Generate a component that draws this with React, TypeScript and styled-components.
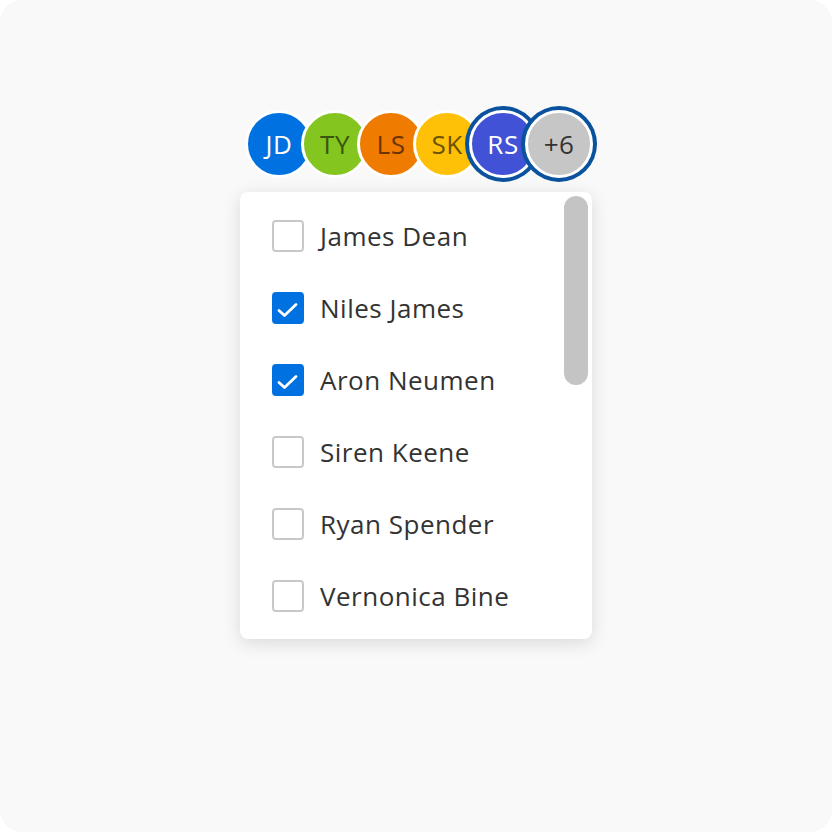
import React from "react";
import styled, { createGlobalStyle } from "styled-components";

const GlobalStyle = createGlobalStyle`
  html, body { margin: 0; padding: 0; background: #ffffff; }
  body { font-family: "Open Sans", "Noto Sans", sans-serif; }
  * { box-sizing: border-box; }
`;

const Page = styled.div`
  width: 832px;
  height: 832px;
  background: #f9f9f9;
  border-radius: 22px;
  display: flex;
  flex-direction: column;
  align-items: center;
  padding-top: 106px;
`;

const AvatarStack = styled.div`
  display: flex;
  align-items: center;
  height: 76px;
  padding-left: 6px;
`;

const Avatar = styled.div<{ $bg: string; $fg: string; $selected?: boolean }>`
  width: 68px;
  height: 68px;
  border-radius: 50%;
  border: 3px solid #ffffff;
  background: ${(p) => p.$bg};
  color: ${(p) => p.$fg};
  display: flex;
  align-items: center;
  justify-content: center;
  font-family: "Open Sans", "Noto Sans", sans-serif;
  font-size: 26px;
  letter-spacing: 0.5px;
  flex: none;
  position: relative;
  box-shadow: ${(p) => (p.$selected ? "0 0 0 4px #0a519e" : "none")};
  & + & {
    margin-left: -12px;
  }
`;

const Panel = styled.div`
  margin-top: 10px;
  width: 352px;
  height: 447px;
  background: #ffffff;
  border-radius: 8px;
  box-shadow: 0 4px 18px rgba(0, 0, 0, 0.13);
  position: relative;
  overflow: hidden;
`;

const List = styled.ul`
  list-style: none;
  margin: 0;
  padding: 8px 0;
  height: 100%;
  overflow: hidden;
`;

const Row = styled.li`
  height: 72px;
  display: flex;
  align-items: center;
  gap: 16px;
  padding-left: 32px;
  font-family: "Open Sans", "Noto Sans", sans-serif;
  font-size: 26px;
  letter-spacing: 0.5px;
  color: #333333;
`;

const Box = styled.span<{ $checked?: boolean }>`
  width: 32px;
  height: 32px;
  border-radius: 4px;
  flex: none;
  display: flex;
  align-items: center;
  justify-content: center;
  background: ${(p) => (p.$checked ? "#0071e0" : "#ffffff")};
  border: 2px solid ${(p) => (p.$checked ? "#0071e0" : "#c8c8c8")};
`;

const Name = styled.span`
  white-space: nowrap;
`;

const ScrollThumb = styled.div`
  position: absolute;
  top: 4px;
  right: 4px;
  width: 24px;
  height: 189px;
  border-radius: 12px;
  background: #c4c4c4;
`;

const avatars = [
  { initials: "JD", bg: "#0071e0", fg: "#ffffff" },
  { initials: "TY", bg: "#84c61f", fg: "#3a5510" },
  { initials: "LS", bg: "#ef7b00", fg: "#6c3300" },
  { initials: "SK", bg: "#ffc107", fg: "#6b5200" },
  { initials: "RS", bg: "#4252d6", fg: "#ffffff", selected: true },
  { initials: "+6", bg: "#c6c6c6", fg: "#333333", selected: true },
];

const people = [
  { name: "James Dean", checked: false },
  { name: "Niles James", checked: true },
  { name: "Aron Neumen", checked: true },
  { name: "Siren Keene", checked: false },
  { name: "Ryan Spender", checked: false },
  { name: "Vernonica Bine", checked: false },
];

const Check = () => (
  <svg width="28" height="28" viewBox="0 0 28 28" fill="none">
    <polyline
      points="5,16.5 10.5,21.5 22,10.5"
      stroke="#ffffff"
      strokeWidth="2.8"
      strokeLinecap="round"
      strokeLinejoin="round"
    />
  </svg>
);

export default function App() {
  return (
    <>
      <GlobalStyle />
      <Page>
        <AvatarStack>
          {avatars.map((a) => (
            <Avatar key={a.initials} $bg={a.bg} $fg={a.fg} $selected={a.selected}>
              {a.initials}
            </Avatar>
          ))}
        </AvatarStack>
        <Panel>
          <List>
            {people.map((p) => (
              <Row key={p.name}>
                <Box $checked={p.checked}>{p.checked && <Check />}</Box>
                <Name>{p.name}</Name>
              </Row>
            ))}
          </List>
          <ScrollThumb />
        </Panel>
      </Page>
    </>
  );
}
